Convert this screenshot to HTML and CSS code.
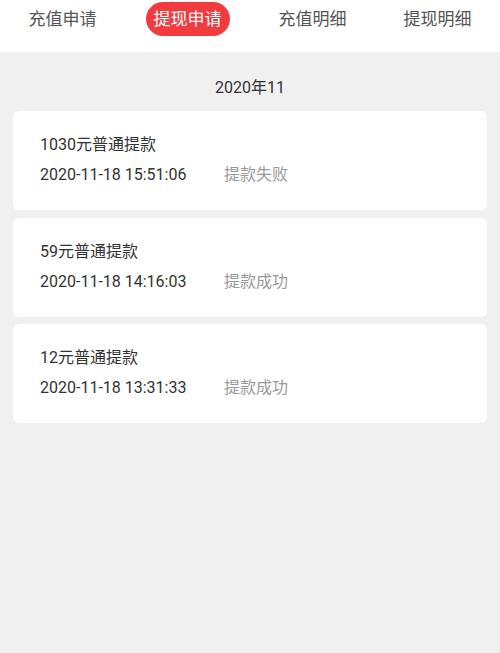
FILE: index.html
```html
<!DOCTYPE html>
<html lang="zh">
<head>
<meta charset="utf-8">
<link rel="stylesheet" href="styles.css">
</head>
<body>
<div class="tabs">
  <div class="tab"><span class="tab-label">充值申请</span></div>
  <div class="tab"><span class="tab-label active">提现申请</span></div>
  <div class="tab"><span class="tab-label">充值明细</span></div>
  <div class="tab"><span class="tab-label">提现明细</span></div>
</div>
<div class="content">
  <div class="month">2020年11</div>
  <div class="list">
    <div class="card">
      <div class="title">1030元普通提款</div>
      <div class="row"><span class="time">2020-11-18 15:51:06</span><span class="status">提款失败</span></div>
    </div>
    <div class="card">
      <div class="title">59元普通提款</div>
      <div class="row"><span class="time">2020-11-18 14:16:03</span><span class="status">提款成功</span></div>
    </div>
    <div class="card">
      <div class="title">12元普通提款</div>
      <div class="row"><span class="time">2020-11-18 13:31:33</span><span class="status">提款成功</span></div>
    </div>
  </div>
</div>
</body>
</html>
```
FILE: styles.css
```css
html, body {
  margin: 0;
  padding: 0;
  height: 100%;
}
body {
  background: #f0f0f0;
  font-family: Roboto, "Noto Sans CJK SC", sans-serif;
  color: #333;
}
.tabs {
  display: grid;
  grid-template-columns: repeat(4, 1fr);
  height: 52px;
  background: #fff;
  align-items: start;
}
.tab {
  display: flex;
  justify-content: center;
  padding-top: 2px;
}
.tab-label {
  font-size: 17px;
  line-height: 34px;
  height: 34px;
  padding: 0 8px;
  color: #555;
  border-radius: 17px;
}
.tab-label.active {
  background: #f23b3e;
  color: #fff;
}
.content {
  padding: 0 13px 0 13px;
}
.month {
  font-size: 16px;
  line-height: 20px;
  text-align: center;
  padding: 26px 0 13px;
  color: #333;
}
.list {
  display: flex;
  flex-direction: column;
  gap: 7.5px;
}
.card {
  background: #fff;
  border-radius: 6px;
  height: 99px;
  box-sizing: border-box;
  padding: 24px 27px 0;
}
.title {
  font-size: 16px;
  line-height: 20px;
  color: #333;
}
.row {
  display: flex;
  margin-top: 10px;
  font-size: 16px;
  line-height: 20px;
}
.time {
  width: 184px;
  color: #333;
}
.status {
  color: #999;
}
```
